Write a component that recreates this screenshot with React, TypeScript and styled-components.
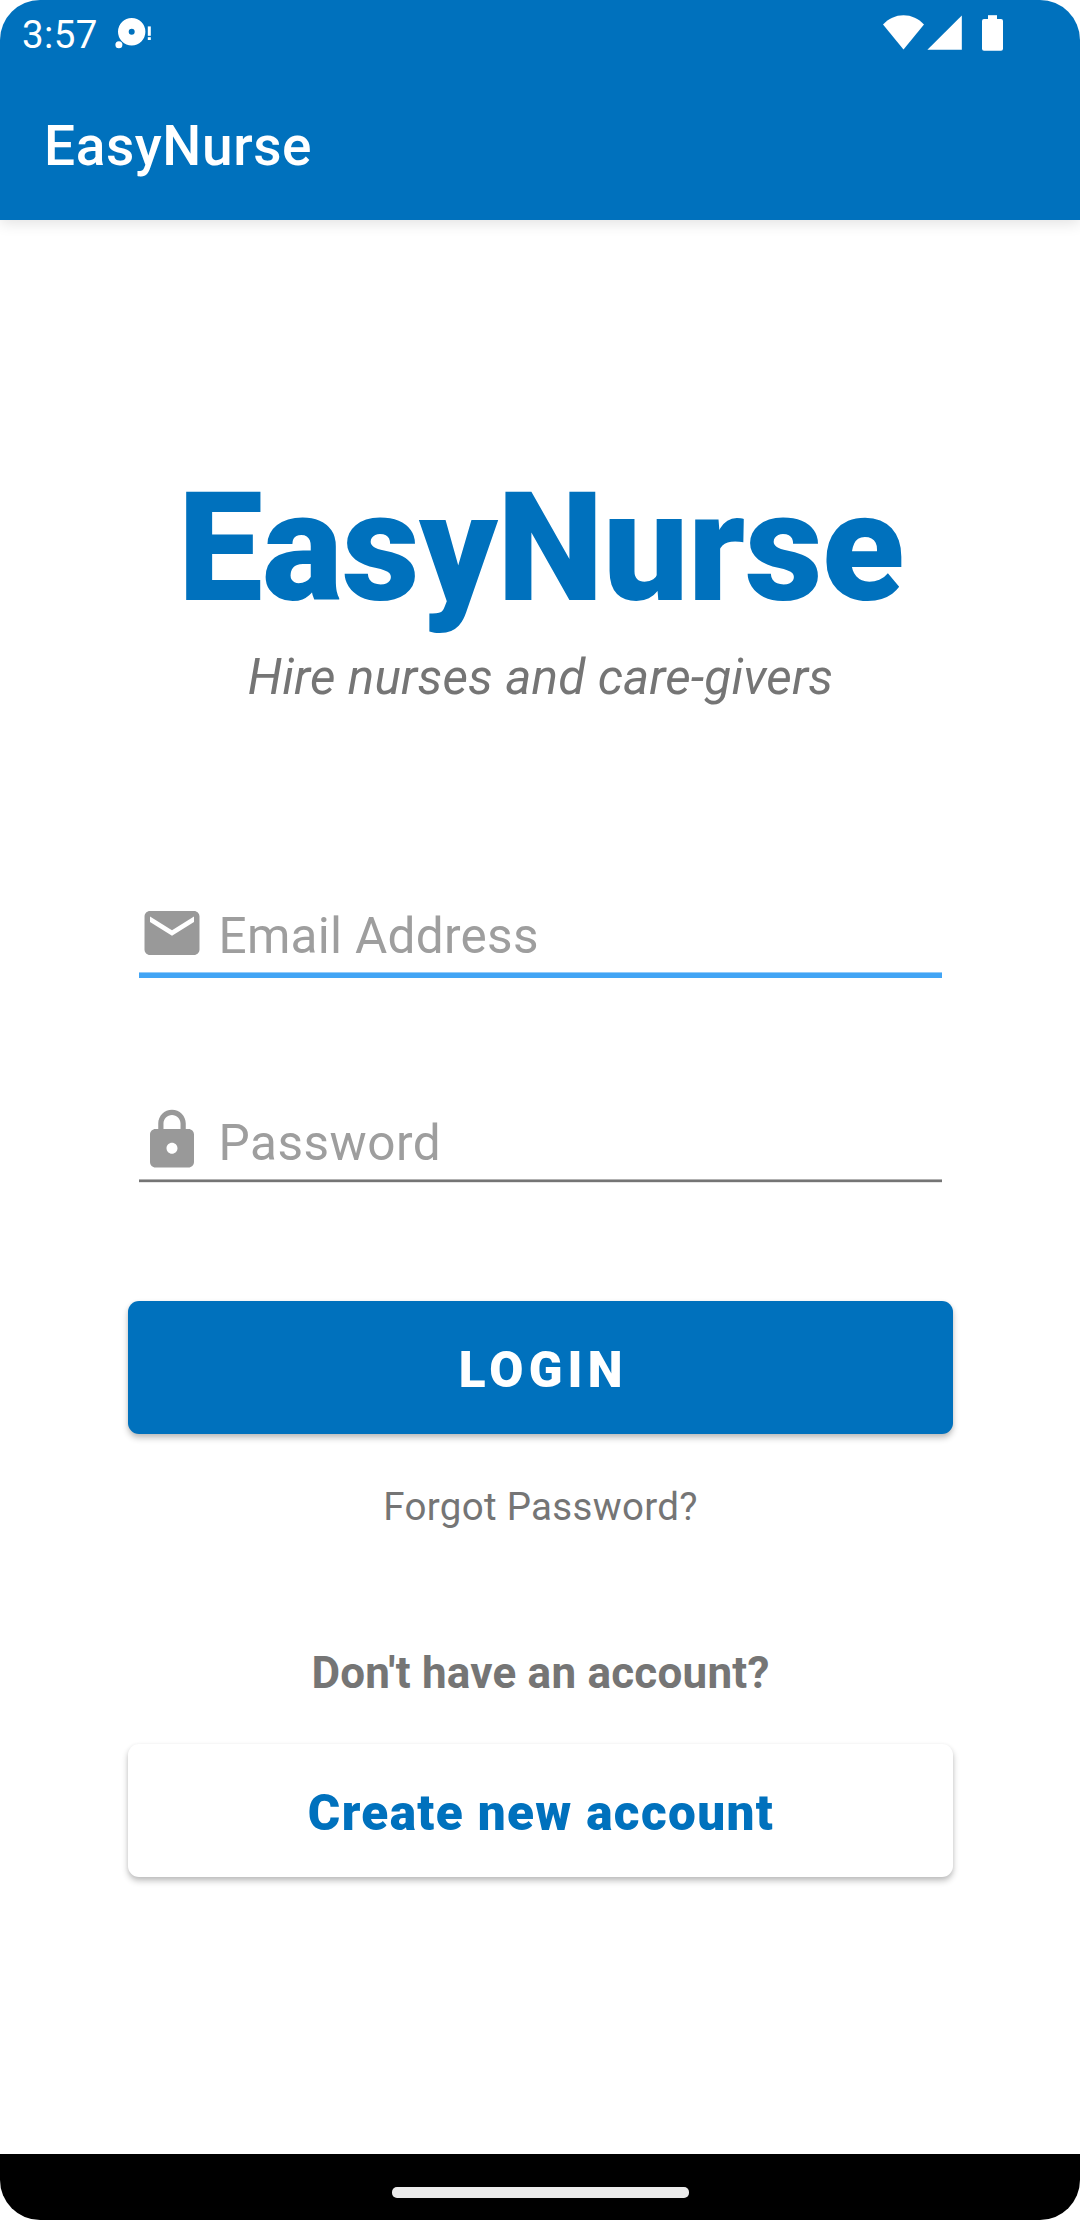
import React from "react";
import styled, { createGlobalStyle } from "styled-components";

const BRAND = "#0071bd";

const GlobalStyle = createGlobalStyle`
  * { box-sizing: border-box; }
  body { margin: 0; background: #fff; font-family: Roboto, "Noto Sans", sans-serif; }
`;

const Screen = styled.div`
  display: flex;
  flex-direction: column;
  width: 1080px;
  height: 2220px;
  border-radius: 40px;
  overflow: hidden;
  background: #fff;
`;

const Header = styled.header`
  flex: none;
  height: 220px;
  background: ${BRAND};
  color: #fff;
  box-shadow: 0 3px 14px rgba(0, 0, 0, 0.12);
`;

const StatusBar = styled.div`
  display: flex;
  align-items: flex-start;
  height: 66px;
  padding: 12px 77px 0 22px;
`;

const Clock = styled.span`
  width: 93px;
  font-size: 38.5px;
  line-height: 45px;
  letter-spacing: 0.4px;
  white-space: nowrap;
`;

const StatusIcons = styled.div`
  display: flex;
  margin-left: auto;
  padding-top: 3px;
`;

const StatusIcon = styled.svg<{ $before?: number; $drop?: number }>`
  display: block;
  flex: none;
  margin-left: ${(p) => p.$before ?? 0}px;
  margin-top: ${(p) => p.$drop ?? 0}px;
  fill: #fff;
`;

const AppTitle = styled.h1`
  margin: 0;
  padding: 48px 44px 0;
  font-size: 55px;
  font-weight: 500;
  line-height: 64px;
  letter-spacing: 0.6px;
`;

const Content = styled.main`
  flex: 1;
  display: flex;
  flex-direction: column;
  align-items: center;
  padding: 240px 127px 0 128px;
`;

const Brand = styled.div`
  padding-left: 1px;
  color: ${BRAND};
  font-size: 151.25px;
  font-weight: 900;
  line-height: 177px;
  letter-spacing: -0.4px;
`;

const Tagline = styled.p`
  margin: 11px 0 0;
  color: #757575;
  font-size: 49.5px;
  font-style: italic;
  line-height: 58px;
  letter-spacing: 0.15px;
`;

const Form = styled.div`
  display: flex;
  flex-direction: column;
  gap: 129px;
  width: 803px;
  margin-top: 194px;
`;

const Field = styled.label<{ $focused?: boolean }>`
  display: flex;
  align-items: flex-start;
  gap: 13.5px;
  height: 78px;
  background: ${(p) =>
    p.$focused
      ? "linear-gradient(#93cbf9 0 1px, #42a5f5 1px 6px) 0 72px / 100% 6px no-repeat"
      : "linear-gradient(#b2b2b2 0 1px, #757575 1px 3px, #e6e6e6 3px 4px) 0 72px / 100% 4px no-repeat"};
`;

const FieldIcon = styled.svg`
  display: block;
  flex: none;
  width: 66px;
  height: 66px;
  fill: #999;
`;

const Hint = styled.span<{ $spacing: number }>`
  margin-top: 7px;
  color: #9e9e9e;
  font-size: 49.5px;
  line-height: 58px;
  letter-spacing: ${(p) => p.$spacing}px;
`;

const Button = styled.button<{ $primary?: boolean }>`
  display: block;
  width: 825px;
  height: 133px;
  margin: ${(p) => (p.$primary ? 116 : 45)}px 0 0;
  padding: 40px 0 35px ${(p) => (p.$primary ? 5.5 : 1)}px;
  border: 0;
  border-radius: 11px;
  background: ${(p) => (p.$primary ? BRAND : "#fff")};
  color: ${(p) => (p.$primary ? "#fff" : BRAND)};
  box-shadow: 0 4px 6px rgba(0, 0, 0, 0.24), 0 1px 4px rgba(0, 0, 0, 0.06);
  font-family: inherit;
  font-size: 49.5px;
  font-weight: 900;
  line-height: 58px;
  letter-spacing: ${(p) => (p.$primary ? 5.2 : 1.35)}px;
`;

const ForgotLink = styled.a`
  margin-top: 50px;
  color: #757575;
  font-size: 38.5px;
  line-height: 45px;
  letter-spacing: 0.3px;
`;

const Prompt = styled.p`
  margin: 118px 0 0;
  color: #757575;
  font-size: 44px;
  font-weight: 700;
  line-height: 52px;
  letter-spacing: 0.22px;
`;

const NavBar = styled.footer`
  flex: none;
  display: flex;
  justify-content: center;
  height: 66px;
  padding-top: 33px;
  background: #000;
`;

const HomePill = styled.div`
  width: 297px;
  height: 11px;
  border-radius: 5px;
  background: #ebebeb;
`;

export default function App() {
  return (
    <Screen>
      <GlobalStyle />
      <Header>
        <StatusBar>
          <Clock>3:57</Clock>
          <StatusIcon $drop={4} width="40" height="34" viewBox="0 0 40 34">
            <path
              fillRule="evenodd"
              d="M16.7 2a13.7 13.7 0 1 0 0 27.4a13.7 13.7 0 1 0 0-27.4zM16.7 12.7a3 3 0 1 1 0 6a3 3 0 1 1 0-6z"
            />
            <circle cx="3.9" cy="28.7" r="3.5" />
            <rect x="32.8" y="10.4" width="3" height="9.4" />
            <rect x="32.8" y="21.2" width="3" height="2.8" />
          </StatusIcon>
          <StatusIcons>
            <StatusIcon width="41" height="35" viewBox="0 0 41 35">
              <path d="M20.5 34.4L0 9.4C5.5 3.6 12.5 0.2 20.5 0.2S35.5 3.6 41 9.4z" />
            </StatusIcon>
            <StatusIcon $before={3} width="35" height="35" viewBox="0 0 35 35">
              <path d="M0.4 34.8L34.8 0.5V34.8z" />
            </StatusIcon>
            <StatusIcon $before={20} width="21" height="36" viewBox="0 0 21 36">
              <rect x="6" y="0.2" width="9" height="5" />
              <rect x="0" y="4" width="21" height="31.8" rx="2" />
            </StatusIcon>
          </StatusIcons>
        </StatusBar>
        <AppTitle>EasyNurse</AppTitle>
      </Header>

      <Content>
        <Brand>EasyNurse</Brand>
        <Tagline>Hire nurses and care-givers</Tagline>

        <Form>
          <Field $focused>
            <FieldIcon viewBox="0 0 24 24">
              <path d="M20 4H4c-1.1 0-1.99.9-1.99 2L2 18c0 1.1.9 2 2 2h16c1.1 0 2-.9 2-2V6c0-1.1-.9-2-2-2zm0 4l-8 5-8-5V6l8 5 8-5v2z" />
            </FieldIcon>
            <Hint $spacing={0.28}>Email Address</Hint>
          </Field>
          <Field>
            <FieldIcon viewBox="0 0 24 24">
              <path d="M18 8h-1V6c0-2.76-2.24-5-5-5S7 3.24 7 6v2H6c-1.1 0-2 .9-2 2v10c0 1.1.9 2 2 2h12c1.1 0 2-.9 2-2V10c0-1.1-.9-2-2-2zm-6 9c-1.1 0-2-.9-2-2s.9-2 2-2 2 .9 2 2-.9 2-2 2zm3.1-9H8.9V6c0-1.71 1.39-3.1 3.1-3.1 1.71 0 3.1 1.39 3.1 3.1v2z" />
            </FieldIcon>
            <Hint $spacing={0.5}>Password</Hint>
          </Field>
        </Form>

        <Button $primary>LOGIN</Button>
        <ForgotLink>Forgot Password?</ForgotLink>
        <Prompt>Don't have an account?</Prompt>
        <Button>Create new account</Button>
      </Content>

      <NavBar>
        <HomePill />
      </NavBar>
    </Screen>
  );
}
